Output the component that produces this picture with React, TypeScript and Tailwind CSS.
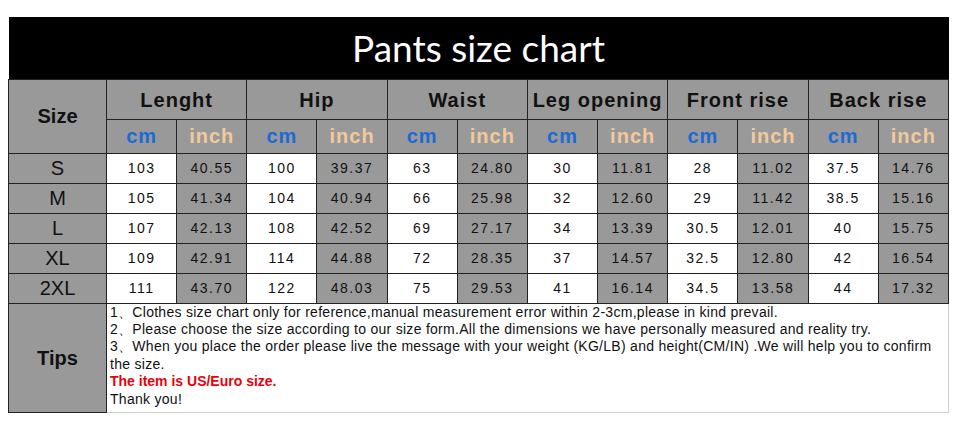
const groups = ["Lenght", "Hip", "Waist", "Leg opening", "Front rise", "Back rise"];

const rows: [string, string[]][] = [
  ["S", ["103", "40.55", "100", "39.37", "63", "24.80", "30", "11.81", "28", "11.02", "37.5", "14.76"]],
  ["M", ["105", "41.34", "104", "40.94", "66", "25.98", "32", "12.60", "29", "11.42", "38.5", "15.16"]],
  ["L", ["107", "42.13", "108", "42.52", "69", "27.17", "34", "13.39", "30.5", "12.01", "40", "15.75"]],
  ["XL", ["109", "42.91", "114", "44.88", "72", "28.35", "37", "14.57", "32.5", "12.80", "42", "16.54"]],
  ["2XL", ["111", "43.70", "122", "48.03", "75", "29.53", "41", "16.14", "34.5", "13.58", "44", "17.32"]],
];

const cell = "border border-[#222]";

const App = () => {
  return (
    <div className="h-[432px] w-[960px] bg-white pl-2 pt-[17px] font-['Liberation_Sans',Arial,sans-serif]">
      <table className="w-[941px] table-fixed border-collapse">
        <colgroup>
          <col className="w-[98px]" />
          {Array.from({ length: 12 }).map((_, i) => (
            <col key={i} />
          ))}
        </colgroup>
        <tbody>
          <tr className="h-[62px] bg-black">
            <td colSpan={13} className="text-center font-['Lato',sans-serif] text-[37px] leading-none text-white">
              Pants size chart
            </td>
          </tr>
          <tr className="h-[40px] bg-[#999]">
            <td rowSpan={2} className={`${cell} text-center text-[20px] font-bold text-[#111]`}>
              Size
            </td>
            {groups.map((g) => (
              <td key={g} colSpan={2} className={`${cell} pt-[2px] text-center text-[20px] font-bold tracking-[1px] text-[#111]`}>
                {g}
              </td>
            ))}
          </tr>
          <tr className="h-[34px] bg-[#999]">
            {groups.map((g) => (
              <>
                <td key={g + "cm"} className={`${cell} text-center text-[20px] font-bold tracking-[1px] text-[#1c6ad6]`}>
                  cm
                </td>
                <td key={g + "in"} className={`${cell} text-center text-[20px] font-bold tracking-[1px] text-[#f3c99a]`}>
                  inch
                </td>
              </>
            ))}
          </tr>
          {rows.map(([size, vals]) => (
            <tr key={size} className="h-[30px]">
              <td className={`${cell} bg-[#999] p-0 text-center text-[20px] leading-[22px] text-[#111]`}>{size}</td>
              {vals.map((v, i) => (
                <td
                  key={i}
                  className={`${cell} p-0 text-center text-[14px] leading-[18px] tracking-[1.5px] text-[#111] ${i % 2 === 1 ? "bg-[#999]" : "bg-white"}`}
                >
                  {v}
                </td>
              ))}
            </tr>
          ))}
          <tr className="h-[109px]">
            <td className={`${cell} bg-[#999] text-center text-[20px] font-bold text-[#111]`}>Tips</td>
            <td colSpan={12} className="border border-[#222] border-r-[#ccc] border-b-[#ccc] px-[3px] pt-0 align-top text-[14px] leading-[17.4px] tracking-[0.28px] text-[#111]">
              <div>1、Clothes size chart only for reference,manual measurement error within 2-3cm,please in kind prevail.</div>
              <div>2、Please choose the size according to our size form.All the dimensions we have personally measured and reality try.</div>
              <div>
                3、When you place the order please live the message with your weight (KG/LB) and height(CM/IN) .We will help you to confirm the size.
              </div>
              <div className="font-bold tracking-normal text-[#e8000b]">The item is US/Euro size.</div>
              <div>Thank you!</div>
            </td>
          </tr>
        </tbody>
      </table>
    </div>
  );
};

export default App;
